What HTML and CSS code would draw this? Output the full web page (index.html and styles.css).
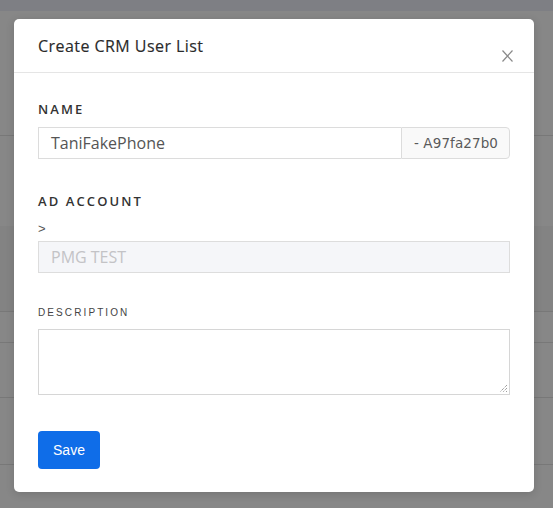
FILE: index.html
```html
<!DOCTYPE html>
<html>
<head>
<meta charset="utf-8">
<link rel="stylesheet" href="styles.css">
</head>
<body>
<div class="backdrop">
  <div class="bg-top"></div>
  <div class="bg-row r1"></div>
  <div class="bg-row r2"></div>
  <div class="bg-row r3 band"></div>
  <div class="bg-row r4"></div>
  <div class="bg-row r5"></div>
  <div class="bg-row r6"></div>
</div>
<div class="modal">
  <div class="modal-header">
    <h2 class="modal-title">Create CRM User List</h2>
    <button class="close" aria-label="Close">
      <svg width="11" height="12" viewBox="0 0 11 12"><path d="M0.5 0.5 L10.5 11.5 M10.5 0.5 L0.5 11.5" stroke="#8a8a8a" stroke-width="1.2" fill="none"/></svg>
    </button>
  </div>
  <div class="modal-body">
    <div class="field field-name">
      <label class="label">NAME</label>
      <div class="input-group">
        <div class="input">TaniFakePhone</div>
        <div class="addon">- A97fa27b0</div>
      </div>
    </div>
    <div class="field field-ad">
      <label class="label">AD ACCOUNT</label>
      <div class="caret">&gt;</div>
      <div class="input disabled">PMG TEST</div>
    </div>
    <div class="field field-desc">
      <label class="small-label">DESCRIPTION</label>
      <div class="textarea">
        <svg class="grip" width="9" height="9" viewBox="0 0 9 9"><path d="M8 1 L1 8 M8 4 L4 8 M8 7 L7 8" stroke="#777" stroke-width="1" stroke-dasharray="1 1" fill="none"/></svg>
      </div>
    </div>
    <button class="btn">Save</button>
  </div>
</div>
</body>
</html>
```

FILE: styles.css
```css
html, body {
  margin: 0;
  padding: 0;
}
body {
  width: 553px;
  height: 508px;
  background: #878787;
  position: relative;
  overflow: hidden;
  font-family: "Open Sans", "Liberation Sans", sans-serif;
}
.backdrop {
  display: flex;
  flex-direction: column;
}
.bg-top {
  height: 11px;
  background: #7e7f84;
}
.bg-row {
  border-bottom: 1px solid #787878;
}
.r1 { height: 124px; }
.r2 { height: 90px; border-bottom: none; }
.band { height: 85px; background: #838383; }
.r4 { height: 30px; }
.r5 { height: 54px; }
.r6 { height: 66px; }

.modal {
  position: absolute;
  left: 14px;
  top: 19px;
  width: 520px;
  height: 473px;
  background: #fff;
  border-radius: 5px;
  box-shadow: 0 2px 8px rgba(0,0,0,0.15);
  display: flex;
  flex-direction: column;
}
.modal-header {
  height: 53px;
  border-bottom: 1px solid #e5e5e5;
  display: flex;
  justify-content: space-between;
  align-items: flex-start;
  padding: 0 21px 0 24px;
}
.modal-title {
  margin: 16px 0 0;
  font-family: "Open Sans", sans-serif;
  font-size: 16px;
  font-weight: 500;
  color: #2a2a2a;
  line-height: 22px;
  letter-spacing: 0.45px;
  -webkit-text-stroke: 0.15px #2a2a2a;
}
.close {
  border: none;
  background: none;
  padding: 0;
  margin-top: 31px;
  width: 11px;
  height: 12px;
  display: block;
}
.close svg { display: block; }

.modal-body {
  padding: 28px 24px 0;
  display: flex;
  flex-direction: column;
}
.label {
  display: block;
  font-family: "Open Sans", sans-serif;
  font-size: 13px;
  font-weight: 600;
  letter-spacing: 2.1px;
  color: #333;
  line-height: 16px;
}
.field-name .label { margin-bottom: 10px; }
.input-group {
  display: flex;
  height: 32px;
}
.input {
  flex: 1;
  height: 32px;
  box-sizing: border-box;
  border: 1px solid #dcdcdc;
  padding: 0 12px;
  font-size: 16px;
  line-height: 30px;
  color: #555;
}
.input-group .input { border-right: none; }
.addon {
  width: 109px;
  box-sizing: border-box;
  border: 1px solid #dcdcdc;
  border-radius: 0 4px 4px 0;
  background: #f9f9f9;
  font-family: "DejaVu Sans", sans-serif;
  font-size: 13.5px;
  line-height: 30px;
  color: #5a5a5a;
  padding-left: 12px;
  letter-spacing: 0.1px;
}
.field-ad { margin-top: 34px; }
.field-ad .label { margin-bottom: 12px; }
.caret {
  font-family: "Liberation Sans", sans-serif;
  font-size: 13px;
  color: #555;
  line-height: 16px;
  margin-bottom: 4px;
}
.input.disabled {
  flex: none;
  background: #f5f6f9;
  color: #c3c3c6;
  border-color: #dddddd;
}
.field-desc { margin-top: 33px; }
.small-label {
  display: block;
  font-family: "Liberation Sans", sans-serif;
  font-size: 10px;
  letter-spacing: 2.1px;
  color: #444;
  line-height: 14px;
  margin-bottom: 9px;
}
.textarea {
  height: 66px;
  box-sizing: border-box;
  border: 1px solid #d6d6d6;
  position: relative;
}
.grip {
  position: absolute;
  right: 1px;
  bottom: 1px;
}
.btn {
  margin-top: 36px;
  align-self: flex-start;
  width: 62px;
  height: 38px;
  border: none;
  border-radius: 4px;
  background: #0f6de8;
  color: #fff;
  font-family: "Liberation Sans", sans-serif;
  font-size: 14px;
  padding: 0;
}
```
